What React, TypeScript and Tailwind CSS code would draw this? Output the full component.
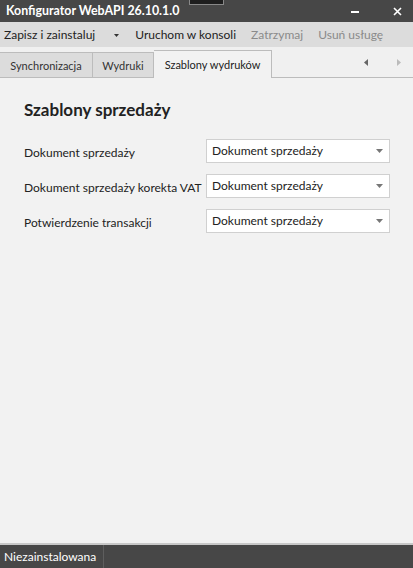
import React from "react";

const font = { fontFamily: 'Lato, "Noto Sans", sans-serif' };

function Combo() {
  return (
    <div className="flex h-[24px] w-[184px] shrink-0 items-center justify-between border border-[#d0d0d0] bg-white pl-[5px] pr-[6px]">
      <span className="whitespace-nowrap text-[12px] leading-none text-[#222]">Dokument sprzedaży</span>
      <svg width="7" height="4" viewBox="0 0 7 4">
        <path d="M0 0 L7 0 L3.5 4 Z" fill="#777" />
      </svg>
    </div>
  );
}

function Row({ label }: { label: string }) {
  return (
    <div className="flex h-[24px] items-center">
      <div className="w-[182px] shrink-0 whitespace-nowrap pt-[4px] text-[12px] leading-none text-[#222]">{label}</div>
      <Combo />
    </div>
  );
}

export default function App() {
  return (
    <div className="flex h-[568px] w-[413px] flex-col bg-[#f2f2f2]" style={font}>
      {/* title bar */}
      <div className="relative flex h-[22px] shrink-0 items-center bg-[#474747] pl-[6px] text-white">
        <span className="whitespace-nowrap text-[12.4px] font-bold leading-none">Konfigurator WebAPI 26.10.1.0</span>
        <div className="absolute left-[189px] top-0 h-[5px] w-[35px] border-x border-b border-[#888] bg-[#1e1e1e]" />
        <div className="ml-auto flex items-center">
          <div className="mr-[34px] mt-[1px] h-[2px] w-[8px] bg-white" />
          <svg width="9" height="9" viewBox="0 0 9 9" className="mr-[11px]">
            <path d="M1 1 L8 8 M8 1 L1 8" stroke="white" strokeWidth="1.6" />
          </svg>
        </div>
      </div>
      {/* menu bar */}
      <div className="flex h-[25px] shrink-0 items-center whitespace-nowrap bg-[#dcdcdc] pl-[4px] text-[12px] leading-none">
        <span className="text-[#222]">Zapisz i zainstaluj</span>
        <svg width="5" height="3" viewBox="0 0 5 3" className="ml-[19px] mt-[1px]">
          <path d="M0 0 L5 0 L2.5 3 Z" fill="#333" />
        </svg>
        <span className="ml-[16px] text-[#222]">Uruchom w konsoli</span>
        <span className="ml-[15px] text-[#8a8a8a]">Zatrzymaj</span>
        <span className="ml-[15px] text-[#8a8a8a]">Usuń usługę</span>
      </div>
      {/* tab strip */}
      <div className="flex h-[31px] shrink-0 items-end whitespace-nowrap border-b border-[#bcbcbc] bg-[#f0f0f0] text-[11px] leading-none">
        <div className="flex h-[25px] w-[93px] items-center justify-center border-r border-t border-[#bcbcbc] bg-[#dcdcdc] text-[#333]">
          Synchronizacja
        </div>
        <div className="flex h-[25px] w-[61px] items-center justify-center border-r border-t border-[#bcbcbc] bg-[#dcdcdc] text-[#333]">
          Wydruki
        </div>
        <div className="relative -mb-px flex h-[28px] w-[118px] items-center justify-center border-r border-t border-[#bcbcbc] bg-[#f2f2f2] text-[#222]">
          Szablony wydruków
        </div>
        <div className="ml-auto mb-[11px] flex items-center">
          <svg width="4" height="7" viewBox="0 0 4 7" className="mr-[29px]">
            <path d="M4 0 L4 7 L0 3.5 Z" fill="#666" />
          </svg>
          <svg width="4" height="7" viewBox="0 0 4 7" className="mr-[12px]">
            <path d="M0 0 L0 7 L4 3.5 Z" fill="#bbb" />
          </svg>
        </div>
      </div>
      {/* content */}
      <div className="flex flex-1 flex-col px-[24px] pt-[23px]">
        <div className="text-[17px] font-bold leading-none text-[#222]">Szablony sprzedaży</div>
        <div className="mt-[21px] flex flex-col gap-[11px]">
          <Row label="Dokument sprzedaży" />
          <Row label="Dokument sprzedaży korekta VAT" />
          <Row label="Potwierdzenie transakcji" />
        </div>
      </div>
      {/* status */}
      <div className="shrink-0 border-t-2 border-[#c8c8c8]">
        <div className="flex h-[23px] items-center bg-[#474747] text-[12px] leading-none text-white">
          <div className="flex h-full w-[104px] items-center whitespace-nowrap border-r border-[#5e5e5e] pl-[4px]">Niezainstalowana</div>
        </div>
      </div>
    </div>
  );
}
